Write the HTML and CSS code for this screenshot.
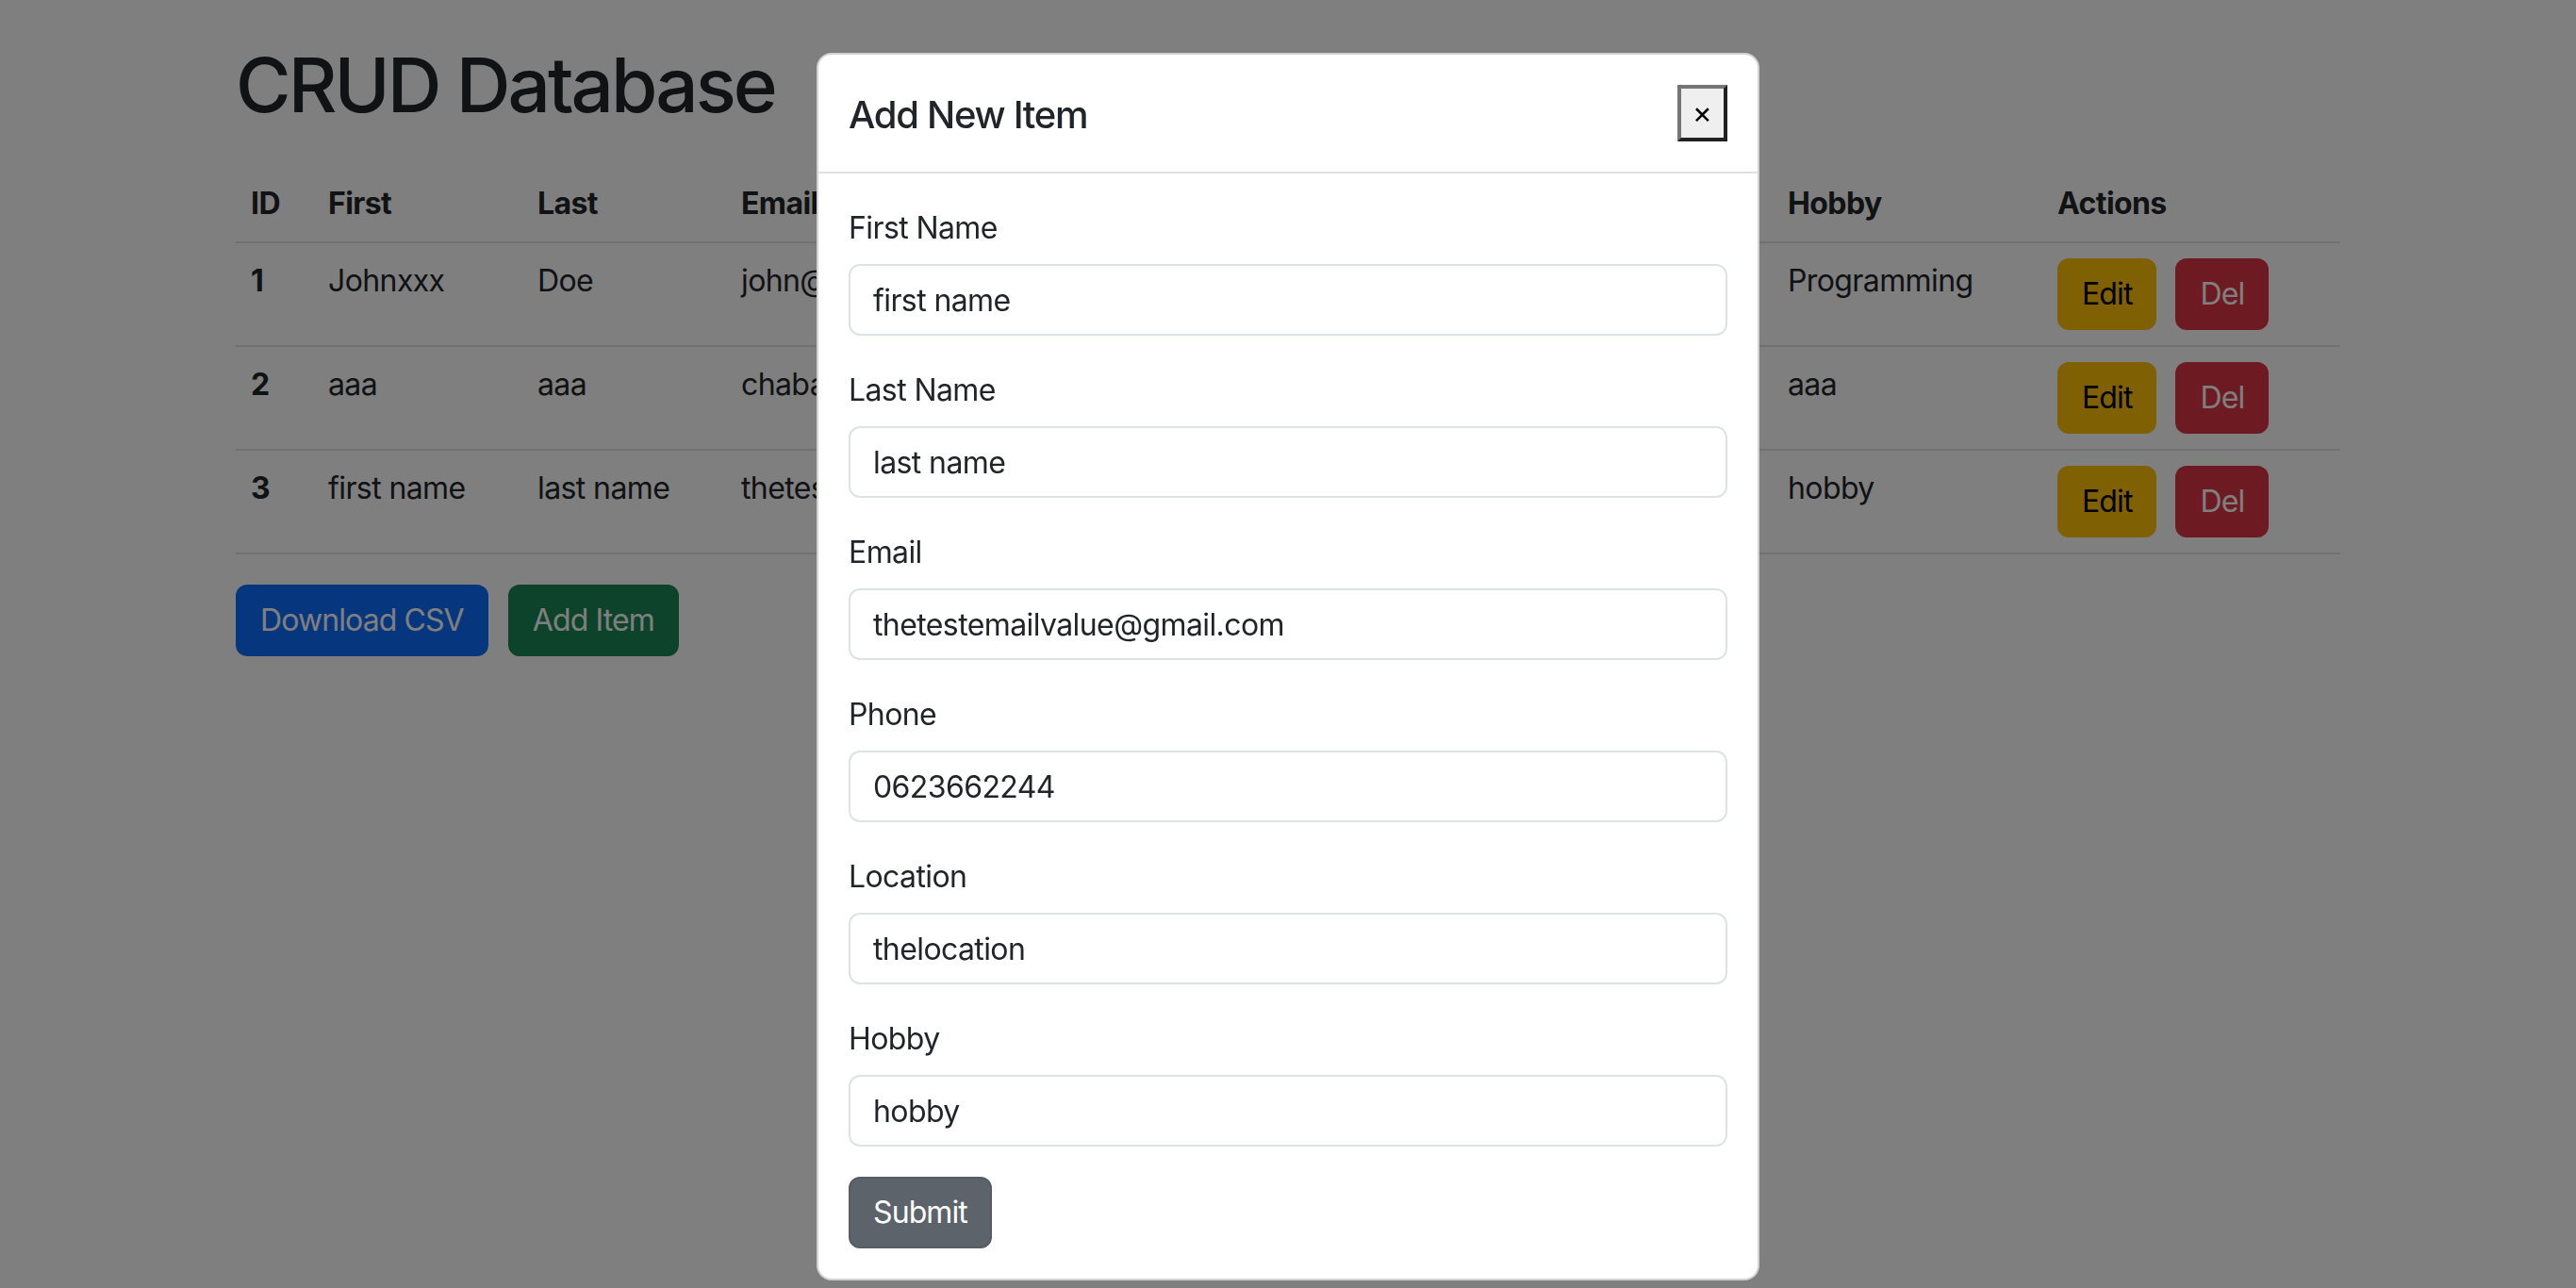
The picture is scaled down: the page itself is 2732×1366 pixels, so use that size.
FILE: index.html
```html
<!DOCTYPE html>
<html lang="en">
<head>
<meta charset="utf-8">
<title>CRUD Database</title>
<link rel="stylesheet" href="styles.css">
</head>
<body>
<div class="container">
  <h1 class="page-title">CRUD Database</h1>
  <table class="data-table">
    <colgroup>
      <col class="c-id"><col class="c-first"><col class="c-last"><col class="c-email">
      <col class="c-phone"><col class="c-loc"><col class="c-hobby"><col class="c-actions">
    </colgroup>
    <thead>
      <tr><th>ID</th><th>First</th><th>Last</th><th>Email</th><th>Phone</th><th>Location</th><th>Hobby</th><th>Actions</th></tr>
    </thead>
    <tbody>
      <tr>
        <th>1</th><td>Johnxxx</td><td>Doe</td><td>john@example.com</td><td>1234567890</td><td>New York</td><td>Programming</td>
        <td><button class="btn btn-warning">Edit</button><button class="btn btn-danger">Del</button></td>
      </tr>
      <tr>
        <th>2</th><td>aaa</td><td>aaa</td><td>chabab@gmail.com</td><td>aaa</td><td>aaa</td><td>aaa</td>
        <td><button class="btn btn-warning">Edit</button><button class="btn btn-danger">Del</button></td>
      </tr>
      <tr>
        <th>3</th><td>first name</td><td>last name</td><td>thetestemailvalue@gmail.com</td><td>0623662244</td><td>thelocation</td><td>hobby</td>
        <td><button class="btn btn-warning">Edit</button><button class="btn btn-danger">Del</button></td>
      </tr>
    </tbody>
  </table>
  <div class="page-actions">
    <button class="btn btn-primary">Download CSV</button>
    <button class="btn btn-success">Add Item</button>
  </div>
</div>

<div class="backdrop"></div>

<div class="modal">
  <div class="modal-content">
    <div class="modal-header">
      <h5 class="modal-title">Add New Item</h5>
      <button class="close-btn">×</button>
    </div>
    <form class="modal-body">
      <div class="field">
        <label class="form-label">First Name</label>
        <input class="form-control" type="text" value="first name">
      </div>
      <div class="field">
        <label class="form-label">Last Name</label>
        <input class="form-control" type="text" value="last name">
      </div>
      <div class="field">
        <label class="form-label">Email</label>
        <input class="form-control" type="text" value="thetestemailvalue@gmail.com">
      </div>
      <div class="field">
        <label class="form-label">Phone</label>
        <input class="form-control" type="text" value="0623662244">
      </div>
      <div class="field">
        <label class="form-label">Location</label>
        <input class="form-control" type="text" value="thelocation">
      </div>
      <div class="field">
        <label class="form-label">Hobby</label>
        <input class="form-control" type="text" value="hobby">
      </div>
      <button type="button" class="btn btn-secondary">Submit</button>
    </form>
  </div>
</div>
</body>
</html>
```

FILE: styles.css
```css
* { box-sizing: border-box; }

html, body {
  margin: 0;
  padding: 0;
}

body {
  font-family: Inter, "Noto Sans", "Liberation Sans", sans-serif;
  font-size: 32px;
  line-height: 48px;
  letter-spacing: -0.6px;
  color: #212529;
  background: #ffffff;
  height: 1366px;
  overflow: hidden;
}

.container {
  width: 2280px;
  margin: 0 auto;
  padding: 0 24px;
}

.page-title {
  font-size: 80px;
  font-weight: 500;
  line-height: 96px;
  letter-spacing: -3px;
  margin: 42px 0 38px;
}

.data-table {
  width: 100%;
  table-layout: fixed;
  border-collapse: collapse;
  margin-bottom: 32px;
}

.c-id { width: 82px; }
.c-first { width: 222px; }
.c-last { width: 216px; }
.c-email { width: 560px; }
.c-phone { width: 290px; }
.c-loc { width: 260px; }
.c-hobby { width: 286px; }
.c-actions { width: 316px; }

.data-table th,
.data-table td {
  padding: 16px;
  text-align: left;
  vertical-align: top;
  border-bottom: 2px solid #dee2e6;
  white-space: nowrap;
  overflow: hidden;
}

.data-table thead th {
  font-weight: 700;
  vertical-align: bottom;
}

.data-table tbody th {
  font-weight: 700;
}

.data-table td .btn + .btn {
  margin-left: 20px;
}

.btn {
  display: inline-block;
  font-family: inherit;
  font-size: 32px;
  line-height: 48px;
  letter-spacing: -0.9px;
  font-weight: 400;
  padding: 12px 24px;
  border: 2px solid transparent;
  border-radius: 12px;
  cursor: pointer;
  vertical-align: top;
}

.btn-warning { background: #ffc107; border-color: #ffc107; color: #000; }
.btn-danger { background: #dc3545; border-color: #dc3545; color: #fff; }
.btn-primary { background: #0d6efd; border-color: #0d6efd; color: #fff; }
.btn-success { background: #198754; border-color: #198754; color: #fff; }
.btn-secondary { background: #5c636a; border-color: #565e64; color: #fff; }

.page-actions {
  display: flex;
  gap: 21px;
}

.backdrop {
  position: fixed;
  inset: 0;
  background: rgba(0, 0, 0, 0.5);
}

.modal {
  position: fixed;
  inset: 0;
  display: flex;
  justify-content: center;
  align-items: flex-start;
  padding-top: 56px;
}

.modal-content {
  width: 1000px;
  background: #fff;
  border: 2px solid rgba(0, 0, 0, 0.175);
  border-radius: 16px;
  overflow: hidden;
}

.modal-header {
  display: flex;
  align-items: center;
  justify-content: space-between;
  padding: 32px;
  border-bottom: 2px solid #dee2e6;
}

.modal-title {
  margin: 0 0 -2px;
  font-size: 40px;
  line-height: 60px;
  font-weight: 500;
  letter-spacing: -1.3px;
  padding-top: 2px;
}

.close-btn {
  font-family: inherit;
  font-size: 32px;
  line-height: 48px;
  padding: 2px 12px;
  margin: 0;
  background: #efefef;
  color: #000;
  border: 4px outset #767676;
  border-radius: 0;
}

.modal-body {
  display: block;
  padding: 32px;
  margin: 0;
}

.field {
  margin-bottom: 32px;
}

.form-label {
  display: block;
  margin-bottom: 14px;
  padding-top: 2px;
}

.form-control {
  display: block;
  width: 100%;
  font-family: inherit;
  font-size: 32px;
  line-height: 48px;
  letter-spacing: -0.6px;
  color: #212529;
  padding: 13px 24px 11px;
  border: 2px solid #dee2e6;
  border-radius: 12px;
  background: #fff;
  margin: 0;
}
```
